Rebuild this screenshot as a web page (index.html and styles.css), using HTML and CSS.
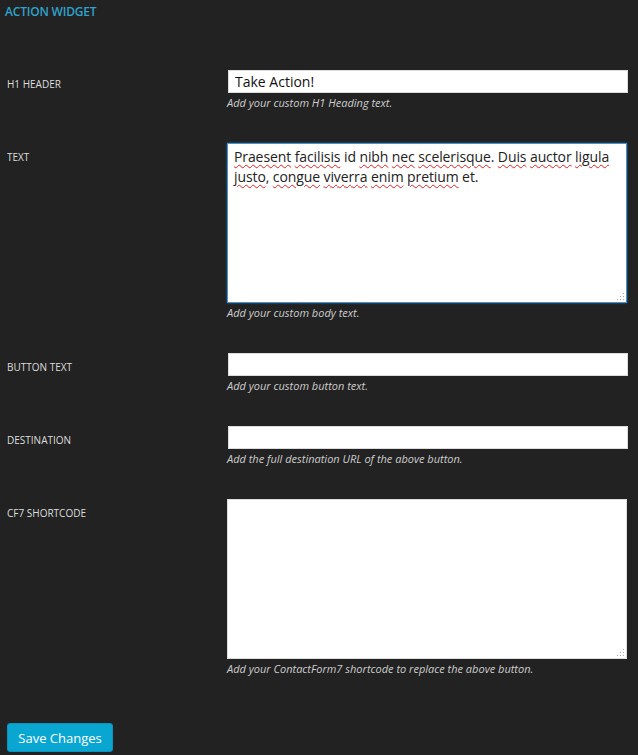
FILE: index.html
```html
<!DOCTYPE html>
<html lang="en">
<head>
<meta charset="utf-8">
<title>Action Widget</title>
<link rel="stylesheet" href="styles.css">
</head>
<body>
<div class="page">
  <h3 class="title">ACTION WIDGET</h3>
  <form class="form">
    <div class="row">
      <label class="label">H1 HEADER</label>
      <div class="field">
        <input class="input" type="text" value="Take Action!">
        <p class="desc">Add your custom H1 Heading text.</p>
      </div>
    </div>
    <div class="row">
      <label class="label">TEXT</label>
      <div class="field">
        <div class="area focused" role="textbox" aria-multiline="true"><span class="sp">Praesent</span> <span class="sp">facilisis</span> id <span class="sp">nibh</span> <span class="sp">nec</span> <span class="sp">scelerisque</span>. <span class="sp">Duis</span> <span class="sp">auctor</span> <span class="sp">ligula</span> <span class="sp">justo</span>, <span class="sp">congue</span> <span class="sp">viverra</span> <span class="sp">enim</span> <span class="sp">pretium</span> et.<svg class="grip" width="10" height="10" viewBox="0 0 10 10"><rect x="8" y="2" width="1" height="1"/><rect x="8" y="5" width="1" height="1"/><rect x="5" y="5" width="1" height="1"/><rect x="8" y="8" width="1" height="1"/><rect x="5" y="8" width="1" height="1"/><rect x="2" y="8" width="1" height="1"/></svg></div>
        <p class="desc">Add your custom body text.</p>
      </div>
    </div>
    <div class="row">
      <label class="label">BUTTON TEXT</label>
      <div class="field">
        <input class="input" type="text" value="">
        <p class="desc">Add your custom button text.</p>
      </div>
    </div>
    <div class="row">
      <label class="label">DESTINATION</label>
      <div class="field">
        <input class="input" type="text" value="">
        <p class="desc">Add the full destination URL of the above button.</p>
      </div>
    </div>
    <div class="row">
      <label class="label">CF7 SHORTCODE</label>
      <div class="field">
        <div class="area" role="textbox" aria-multiline="true"><svg class="grip" width="10" height="10" viewBox="0 0 10 10"><rect x="8" y="2" width="1" height="1"/><rect x="8" y="5" width="1" height="1"/><rect x="5" y="5" width="1" height="1"/><rect x="8" y="8" width="1" height="1"/><rect x="5" y="8" width="1" height="1"/><rect x="2" y="8" width="1" height="1"/></svg></div>
        <p class="desc">Add your ContactForm7 shortcode to replace the above button.</p>
      </div>
    </div>
    <div class="actions">
      <button class="btn" type="button">Save Changes</button>
    </div>
  </form>
</div>
</body>
</html>
```

FILE: styles.css
```css
html, body {
  margin: 0;
  padding: 0;
  background: #222222;
}
body {
  font-family: "Open Sans", "Noto Sans", sans-serif;
  color: #dddddd;
  width: 638px;
  height: 755px;
  overflow: hidden;
}
.page {
  padding-top: 4px;
}
.title {
  margin: 0;
  padding-left: 5px;
  font-size: 12px;
  line-height: 16px;
  font-weight: 600;
  color: #2ea2cc;
  text-transform: uppercase;
  letter-spacing: -0.2px;
}
.form {
  margin-top: 50px;
  display: flex;
  flex-direction: column;
  gap: 33px;
}
.row {
  display: flex;
  padding-left: 7px;
}
.label {
  width: 220px;
  flex: none;
  padding-top: 7px;
  font-size: 10px;
  line-height: 14px;
  color: #dddddd;
}
.field {
  width: 401px;
  flex: none;
}
.input {
  display: block;
  box-sizing: border-box;
  width: 400px;
  height: 23px;
  margin: 0 0 0 1px;
  padding: 0 6px;
  border: 1px solid #dddddd;
  background: #ffffff;
  font-family: "Open Sans", "Noto Sans", sans-serif;
  font-size: 14px;
  color: #111111;
  outline: none;
}
.area {
  position: relative;
  box-sizing: border-box;
  width: 400px;
  height: 160px;
  padding: 3px 6px;
  border: 1px solid #dddddd;
  background: #ffffff;
  font-size: 14px;
  line-height: 20px;
  letter-spacing: -0.1px;
  color: #222222;
}
.area.focused {
  border-color: #4a90cf;
  box-shadow: 0 0 2px rgba(30, 140, 190, 0.8);
}
.sp {
  text-decoration: underline wavy #e02020;
  text-decoration-thickness: 1px;
  text-underline-offset: 2px;
}
.grip {
  position: absolute;
  right: 1px;
  bottom: 1px;
  fill: #aaaaaa;
}
.desc {
  margin: 3px 0 0 0;
  font-size: 11px;
  line-height: 14px;
  font-style: italic;
  color: #cccccc;
}
.actions {
  padding-left: 7px;
  margin-top: 14px;
}
.btn {
  box-sizing: border-box;
  width: 106px;
  height: 29px;
  padding: 0;
  border: 1px solid #0a93bd;
  border-radius: 3px;
  background: #0aa6d2;
  color: #ffffff;
  font-family: "Open Sans", "Noto Sans", sans-serif;
  font-size: 13px;
}
```
